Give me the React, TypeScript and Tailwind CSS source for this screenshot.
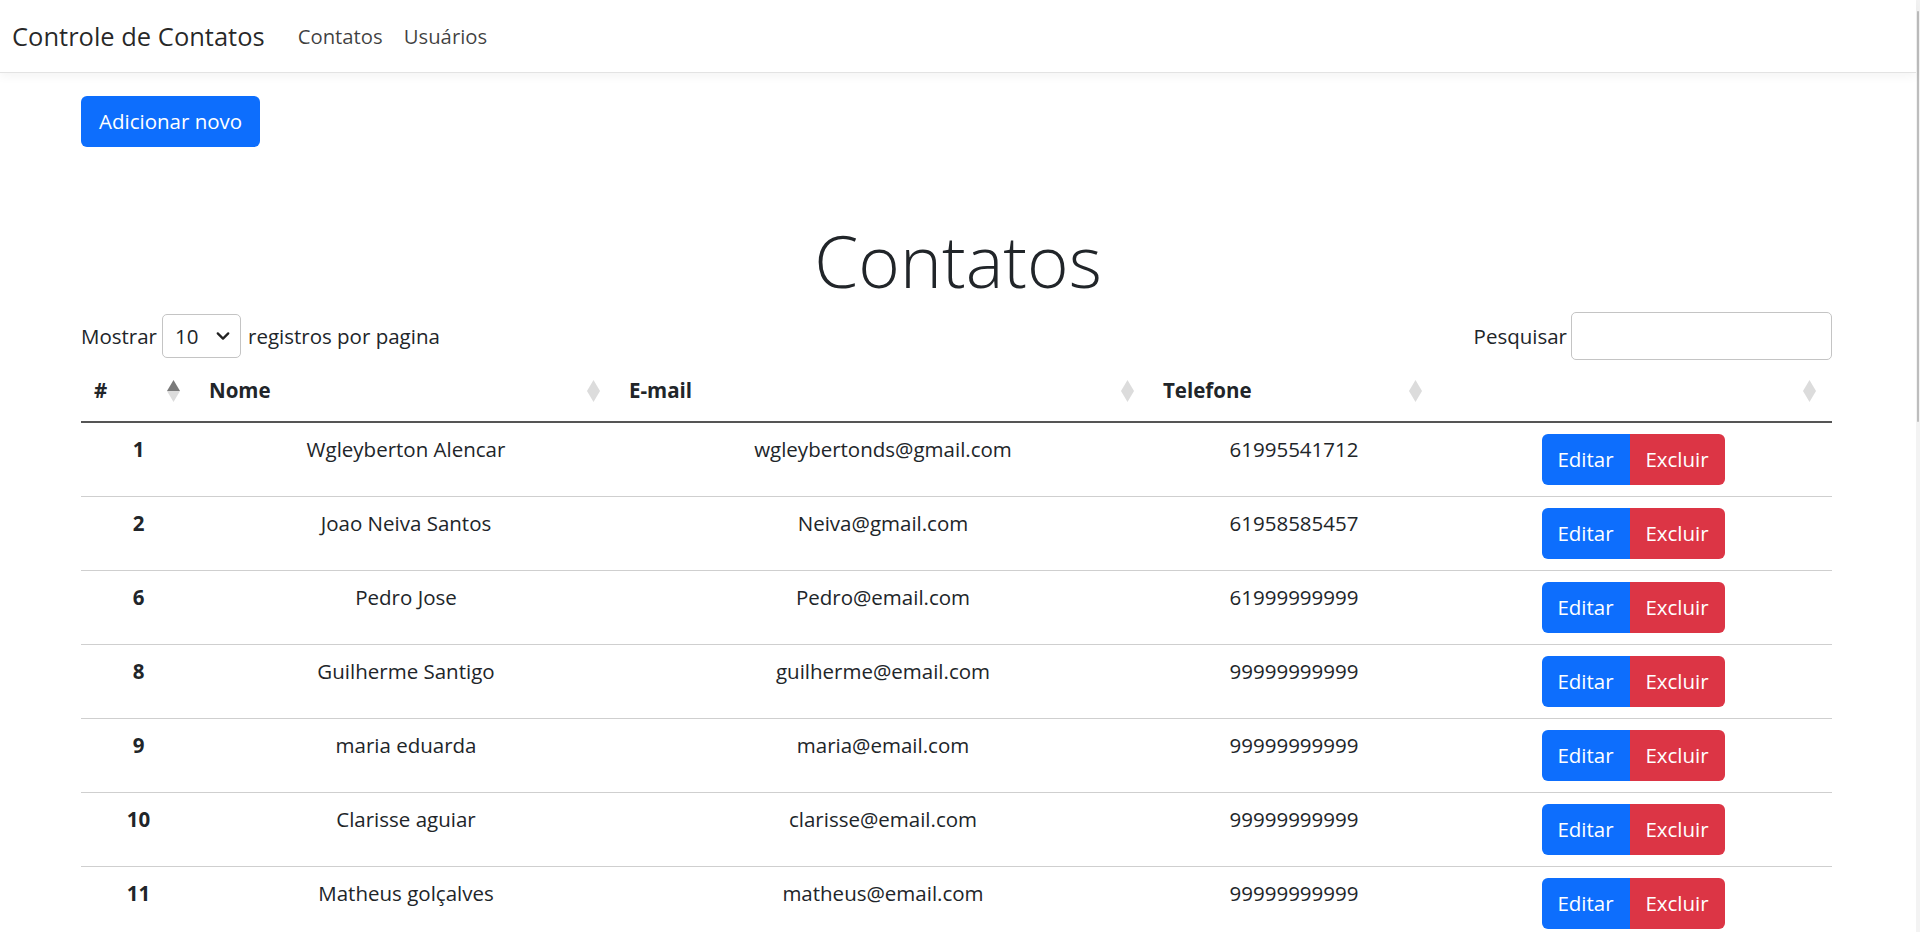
import { FC } from "react";

type Contato = { id: number; nome: string; email: string; telefone: string };

const contatos: Contato[] = [
  { id: 1, nome: "Wgleyberton Alencar", email: "wgleybertonds@gmail.com", telefone: "61995541712" },
  { id: 2, nome: "Joao Neiva Santos", email: "Neiva@gmail.com", telefone: "61958585457" },
  { id: 6, nome: "Pedro Jose", email: "Pedro@email.com", telefone: "61999999999" },
  { id: 8, nome: "Guilherme Santigo", email: "guilherme@email.com", telefone: "99999999999" },
  { id: 9, nome: "maria eduarda", email: "maria@email.com", telefone: "99999999999" },
  { id: 10, nome: "Clarisse aguiar", email: "clarisse@email.com", telefone: "99999999999" },
  { id: 11, nome: "Matheus golçalves", email: "matheus@email.com", telefone: "99999999999" },
];

// setas de ordenacao do cabecalho
const SortIcon: FC<{ active?: boolean }> = ({ active }) => (
  <svg width="13" height="22" viewBox="0 0 13 22" className="shrink-0">
    <polygon points="6.5,0 13,11 0,11" fill={active ? "#7a7a7a" : "#dcdcdc"} />
    <polygon points="0,11 13,11 6.5,22" fill="#dcdcdc" />
  </svg>
);

const headers = [
  { label: "#", w: "w-[115px]", active: true },
  { label: "Nome", w: "w-[420px]" },
  { label: "E-mail", w: "w-[534px]" },
  { label: "Telefone", w: "w-[288px]" },
  { label: "", w: "w-[394px]" },
];

export default function App() {
  return (
    <div className="h-[932px] w-full overflow-hidden flex bg-white text-[#212529] font-['Open_Sans',sans-serif]">
      <div className="flex-1 min-w-0">
        {/*navbar*/}
        <nav className="h-[73px] flex items-center border-b border-[#e3e3e3] shadow-[0_3px_10px_rgba(0,0,0,0.05)] relative">
          <span className="ml-[12px] text-[25.5px] text-black/85">Controle de Contatos</span>
          <div className="ml-[33px] flex gap-[21px] text-[20.3px] text-black/75">
            <a>Contatos</a>
            <a>Usuários</a>
          </div>
        </nav>

        <div className="px-[81px]">
          <button className="mt-[23px] h-[51px] px-[18px] rounded-[6px] bg-[#0d6efd] text-white text-[20.5px]">
            Adicionar novo
          </button>

          <h1 className="mt-[66px] h-[96px] leading-[96px] text-center text-[71px] font-light text-[#212529]">
            Contatos
          </h1>

          {/*controles*/}
          <div className="mt-[3px] flex items-center justify-between h-[48px] text-[20.5px]">
            <div className="flex items-center">
              <span>Mostrar</span>
              <div className="ml-[5px] mr-[7px] h-[44px] w-[79px] border border-[#c4c4c4] rounded-[5px] flex items-center justify-between pl-[12px] pr-[10px]">
                <span>10</span>
                <svg width="14" height="14" viewBox="0 0 16 16">
                  <path d="M2 5l6 6 6-6" fill="none" stroke="#222" strokeWidth="2.6" strokeLinecap="round" strokeLinejoin="round" />
                </svg>
              </div>
              <span>registros por pagina</span>
            </div>
            <div className="flex items-center mr-[3px]">
              <span className="mr-[4px]">Pesquisar</span>
              <div className="h-[48px] w-[261px] border border-[#c4c4c4] rounded-[5px]" />
            </div>
          </div>

          {/*tabela*/}
          <table className="w-[1751px] table-fixed text-[20.5px]">
            <thead>
              <tr className="h-[62px] border-b-2 border-[#555]">
                {headers.map((h, i) => (
                  <th key={i} className={`${h.w} p-0 align-middle`}>
                    <div className="flex items-center justify-between pl-[13px] pr-[16px] font-bold">
                      <span>{h.label}</span>
                      <SortIcon active={h.active} />
                    </div>
                  </th>
                ))}
              </tr>
            </thead>
            <tbody>
              {contatos.map((c) => (
                <tr key={c.id} className="h-[74px] border-b border-[#cfcfcf] align-top text-center">
                  <td className="pt-[11px] leading-[30px] font-bold">{c.id}</td>
                  <td className="pt-[11px] leading-[30px]">{c.nome}</td>
                  <td className="pt-[11px] leading-[30px]">{c.email}</td>
                  <td className="pt-[11px] leading-[30px]">{c.telefone}</td>
                  <td className="pt-[11px] pr-[4px]">
                    <div className="inline-flex h-[51px] rounded-[6px] overflow-hidden text-white">
                      <button className="w-[88px] bg-[#0d6efd]">Editar</button>
                      <button className="w-[95px] bg-[#dc3545]">Excluir</button>
                    </div>
                  </td>
                </tr>
              ))}
            </tbody>
          </table>
        </div>
      </div>

      {/*barra de rolagem*/}
      <div className="w-[4px] bg-[#f3f3f3] pt-[11px]">
        <div className="ml-[1px] w-[2px] h-[411px] bg-[#bdbdbd] rounded-full" />
      </div>
    </div>
  );
}
